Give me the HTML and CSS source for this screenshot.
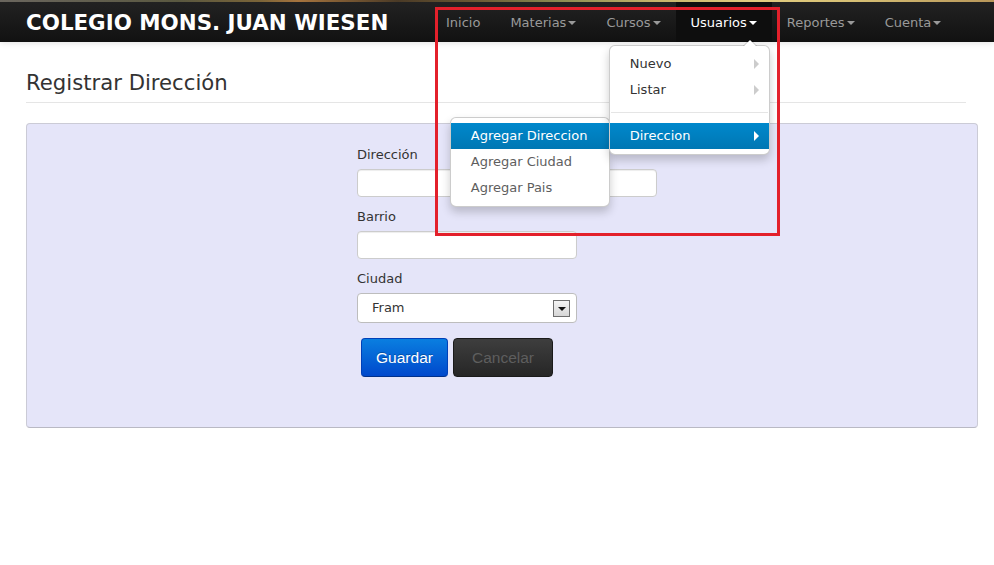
FILE: index.html
```html
<!DOCTYPE html>
<html lang="es">
<head>
<meta charset="utf-8">
<title>Registrar Dirección</title>
<link rel="stylesheet" href="styles.css">
</head>
<body>
<header class="navbar">
  <div class="strip"></div>
  <div class="navbar-inner">
    <div class="container nav-row">
      <a class="brand" href="#">COLEGIO MONS. JUAN WIESEN</a>
      <ul class="nav">
        <li><a href="#">Inicio</a></li>
        <li><a href="#">Materias<b class="caret"></b></a></li>
        <li><a href="#">Cursos<b class="caret"></b></a></li>
        <li class="active open">
          <a href="#">Usuarios<b class="caret"></b></a>
          <ul class="dropdown-menu">
            <li class="has-sub"><a href="#">Nuevo</a></li>
            <li class="has-sub"><a href="#">Listar</a></li>
            <li class="divider"></li>
            <li class="has-sub hover"><a href="#">Direccion</a>
              <ul class="dropdown-menu submenu">
                <li class="hover"><a href="#">Agregar Direccion</a></li>
                <li><a href="#">Agregar Ciudad</a></li>
                <li><a href="#">Agregar Pais</a></li>
              </ul>
            </li>
          </ul>
        </li>
        <li><a href="#">Reportes<b class="caret"></b></a></li>
        <li><a href="#">Cuenta<b class="caret"></b></a></li>
      </ul>
    </div>
  </div>
</header>

<main class="container">
  <h1 class="page-header">Registrar Dirección</h1>
  <section class="panel">
    <form class="form">
      <label for="dir">Dirección</label>
      <input id="dir" class="input-wide" type="text">
      <label for="barrio">Barrio</label>
      <input id="barrio" class="input-mid" type="text">
      <label>Ciudad</label>
      <div class="select">
        <span class="select-value">Fram</span>
        <span class="select-btn"><i class="select-arrow"></i></span>
      </div>
      <div class="actions">
        <button type="button" class="btn btn-primary">Guardar</button>
        <button type="button" class="btn btn-inverse">Cancelar</button>
      </div>
    </form>
  </section>
</main>

<div class="annotation"></div>
</body>
</html>
```

FILE: styles.css
```css
* { box-sizing: border-box; }

html, body {
  margin: 0;
  padding: 0;
  background: #ffffff;
}

body {
  font-family: "DejaVu Sans", Verdana, sans-serif;
  font-size: 13px;
  line-height: 20px;
  color: #333333;
}

a { text-decoration: none; }

.container {
  width: 940px;
  margin-left: 26px;
}

/* ---------- navbar ---------- */
.navbar {
  position: relative;
  z-index: 10;
  box-shadow: 0 1px 6px rgba(0, 0, 0, 0.12);
}

.strip {
  height: 2px;
  background: linear-gradient(90deg, #6a665e 0%, #5a5840 18%, #7a6438 26%, #a6743e 30%, #4a3a26 40%, #6c5a34 48%, #8a8a50 56%, #c7b36a 66%, #e2cd80 76%, #d6bf74 86%, #b8975a 100%);
}

.navbar-inner {
  height: 40px;
  background: linear-gradient(#222222, #111111);
}

.nav-row {
  display: flex;
  align-items: stretch;
  height: 40px;
}

.brand {
  flex: none;
  width: 405px;
  padding-top: 1px;
  font-family: "DejaVu Sans", Verdana, sans-serif;
  font-weight: bold;
  font-size: 21.4px;
  line-height: 40px;
  color: #ffffff;
  white-space: nowrap;
}

.nav {
  display: flex;
  margin: 0;
  padding: 0;
  list-style: none;
}

.nav > li {
  position: relative;
}

.nav > li > a {
  display: block;
  padding: 11px 15px 9px;
  line-height: 20px;
  color: #999999;
  white-space: nowrap;
}

.nav > li.active > a {
  background: #0e0e0e;
  color: #ffffff;
}

.caret {
  display: inline-block;
  width: 0;
  height: 0;
  margin-left: 2px;
  margin-top: 8px;
  vertical-align: top;
  border-top: 4px solid #999999;
  border-left: 4px solid transparent;
  border-right: 4px solid transparent;
}

.active .caret { border-top-color: #ffffff; }

/* ---------- dropdown ---------- */
.dropdown-menu {
  position: absolute;
  top: calc(100% + 3px);
  right: 2px;
  width: 161px;
  margin: 0;
  padding: 5px 0;
  list-style: none;
  background: #ffffff;
  border: 1px solid rgba(0, 0, 0, 0.2);
  border-radius: 6px;
  box-shadow: 0 5px 10px rgba(0, 0, 0, 0.2);
}

.nav > li > .dropdown-menu::before {
  content: "";
  position: absolute;
  top: -7px;
  right: 12px;
  border-left: 7px solid transparent;
  border-right: 7px solid transparent;
  border-bottom: 7px solid rgba(0, 0, 0, 0.2);
}

.nav > li > .dropdown-menu::after {
  content: "";
  position: absolute;
  top: -6px;
  right: 13px;
  border-left: 6px solid transparent;
  border-right: 6px solid transparent;
  border-bottom: 6px solid #ffffff;
}

.dropdown-menu li {
  position: relative;
}

.dropdown-menu li > a {
  display: block;
  padding: 3px 20px;
  line-height: 20px;
  color: #333333;
  white-space: nowrap;
}

.dropdown-menu li.hover > a {
  color: #ffffff;
  background: linear-gradient(#0088cc, #0077b3);
}

.has-sub > a::after {
  content: "";
  float: right;
  width: 0;
  height: 0;
  margin-top: 5px;
  margin-right: -10px;
  border-top: 5px solid transparent;
  border-bottom: 5px solid transparent;
  border-left: 5px solid #cccccc;
}

.has-sub.hover > a::after { border-left-color: #ffffff; }

.divider {
  height: 2px;
  margin: 9px 1px;
  background: #e5e5e5;
  border-bottom: 1px solid #ffffff;
}

.submenu {
  top: -6px;
  right: 100%;
  width: 160px;
  margin-right: 0;
  z-index: -1;
}

.submenu li > a { color: #5e5e5e; }

/* ---------- content ---------- */
.page-header {
  margin: 26px 0 20px;
  padding: 0 0 4px 0;
  font-size: 21.2px;
  font-weight: normal;
  line-height: 30px;
  color: #333333;
  border-bottom: 1px solid #e5e5e5;
}

.panel {
  width: 952px;
  padding: 21px 0 50px 330px;
  background: #e5e5f9;
  border: 1px solid #cbcbd6;
  border-bottom-color: #b9b9c4;
  border-radius: 4px;
}

.form {
  display: flex;
  flex-direction: column;
  align-items: flex-start;
}

.form label {
  display: block;
  margin-bottom: 4px;
  line-height: 20px;
  color: #333333;
}

.form input {
  display: block;
  height: 28px;
  margin: 0 0 10px 0;
  padding: 4px 6px;
  font: inherit;
  background: #ffffff;
  border: 1px solid #cccccc;
  border-radius: 4px;
  box-shadow: inset 0 1px 1px rgba(0, 0, 0, 0.075);
}

.input-wide { width: 300px; }
.input-mid { width: 220px; }

.select {
  display: flex;
  align-items: center;
  justify-content: space-between;
  width: 220px;
  height: 30px;
  padding: 0 6px 0 14px;
  background: #ffffff;
  border: 1px solid #bdbdbd;
  border-radius: 4px;
}

.select-value { color: #333333; }

.select-btn {
  display: flex;
  align-items: center;
  justify-content: center;
  width: 17px;
  height: 17px;
  background: linear-gradient(#f4f4f4, #d6d6d6);
  border: 1px solid #6e6e6e;
}

.select-arrow {
  width: 0;
  height: 0;
  margin-top: 1px;
  border-top: 4px solid #111111;
  border-left: 4px solid transparent;
  border-right: 4px solid transparent;
}

.actions {
  display: flex;
  gap: 5px;
  margin-top: 15px;
  padding-left: 4px;
}

.btn {
  height: 39px;
  padding: 0 14px;
  font-family: "Liberation Sans", Arial, sans-serif;
  font-size: 15.5px;
  border-radius: 4px;
  cursor: pointer;
}

.btn-primary {
  width: 87px;
  color: #ffffff;
  text-shadow: 0 -1px 0 rgba(0, 0, 0, 0.25);
  background: linear-gradient(#0a7fe0, #0048cc);
  border: 1px solid #0040b8;
  border-bottom-color: #00308a;
}

.btn-inverse {
  width: 100px;
  color: #5e5e5e;
  background: linear-gradient(#3e3e3e, #262626);
  border: 1px solid #1a1a1a;
}

/* ---------- annotation overlay ---------- */
.annotation {
  position: absolute;
  left: 435px;
  top: 7px;
  width: 345px;
  height: 229px;
  border: 3px solid #e3202b;
  z-index: 20;
  pointer-events: none;
}
```
